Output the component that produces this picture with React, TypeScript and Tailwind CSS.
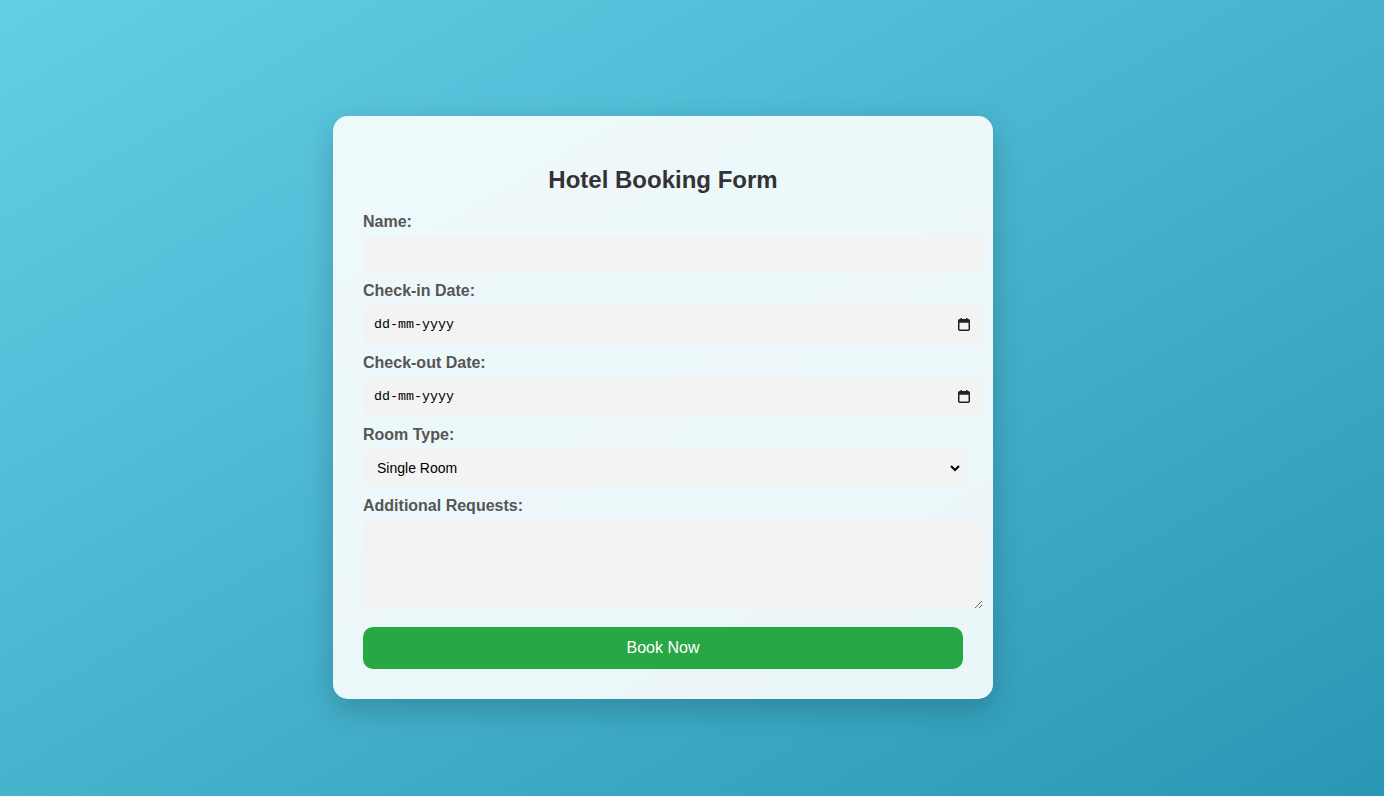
import React from 'react';

const labelCls = 'block mb-[5px] text-base leading-[18px] font-bold text-[#555]';
const fieldCls =
  'block w-[620px] mb-[10px] p-[10px] rounded-[5px] border-0 bg-[#f3f3f3] text-[13.33px] text-black outline-none';

const CalendarIcon = () => (
  <svg
    width="12"
    height="13"
    viewBox="0 0 12 13"
    className="pointer-events-none absolute right-[13px] top-[13px]"
  >
    <rect x="0.75" y="1.75" width="10.5" height="10.5" rx="1" fill="none" stroke="#222" strokeWidth="1.5" />
    <rect x="0.75" y="1.75" width="10.5" height="3" fill="#222" />
    <rect x="2.5" y="0" width="1.5" height="2.5" fill="#222" />
    <rect x="8" y="0" width="1.5" height="2.5" fill="#222" />
  </svg>
);

const DateField: React.FC = () => (
  <div className="relative w-[620px] mb-[10px]">
    <input
      type="text"
      placeholder="dd-mm-yyyy"
      className={`${fieldCls} !mb-0 h-[39px] !pl-[11px] font-['Liberation_Mono',monospace] placeholder:text-black`}
    />
    <CalendarIcon />
  </div>
);

const App: React.FC = () => {
  return (
    <div
      className="min-h-screen w-full bg-gradient-to-br from-[#63cfe6] to-[#2997b4] pt-[116px] pl-[333px]"
      style={{ fontFamily: '"Liberation Sans", Arial, sans-serif' }}
    >
      {/* Booking card */}
      <div className="w-[660px] rounded-[15px] bg-white/90 p-[30px] shadow-[0_10px_30px_rgba(0,0,0,0.2)]">
        <h2 className="mt-[20px] mb-[19px] text-center text-2xl leading-[28px] font-bold text-[#333]">
          Hotel Booking Form
        </h2>

        <form onSubmit={(e) => e.preventDefault()}>
          <label className={labelCls}>Name:</label>
          <input type="text" className={`${fieldCls} h-[36px]`} />

          <label className={labelCls}>Check-in Date:</label>
          <DateField />

          <label className={labelCls}>Check-out Date:</label>
          <DateField />

          <label className={labelCls}>Room Type:</label>
          <select className={`${fieldCls} !w-[600px] h-[38px] !text-[14px]`} defaultValue="single">
            <option value="single">Single Room</option>
            <option value="double">Double Room</option>
            <option value="suite">Suite</option>
          </select>

          <label className={labelCls}>Additional Requests:</label>
          <textarea className={`${fieldCls} h-[89px] !mb-[18px]`} />

          <button
            type="submit"
            className="block w-[600px] h-[42px] rounded-[10px] bg-[#28a745] text-base text-white cursor-pointer"
          >
            Book Now
          </button>
        </form>
      </div>
    </div>
  );
};

export default App;
